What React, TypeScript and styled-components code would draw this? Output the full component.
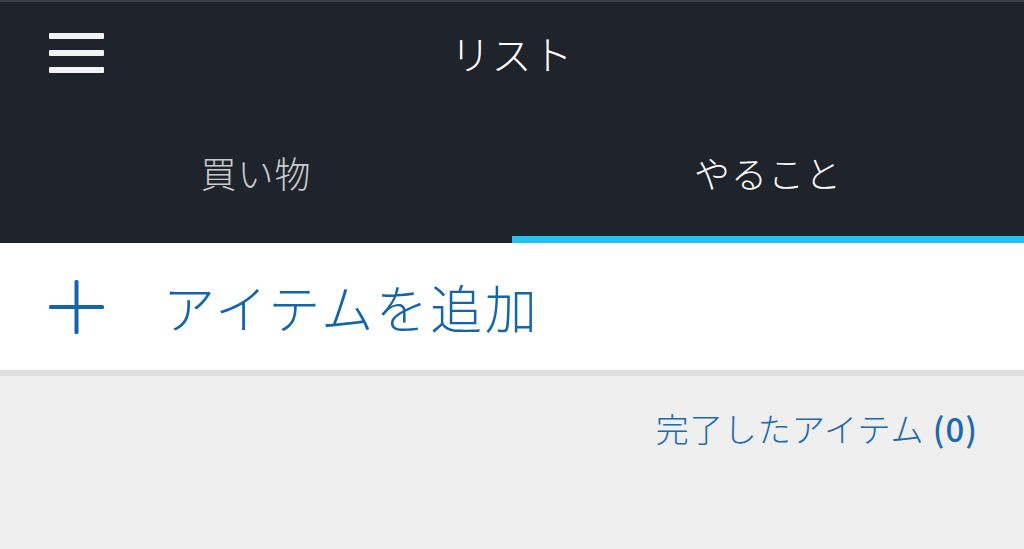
import React, { useState } from "react";
import styled, { createGlobalStyle } from "styled-components";

const GlobalStyle = createGlobalStyle`
  html, body {
    margin: 0;
    padding: 0;
    background: #efefef;
    font-family: "Noto Sans CJK JP", "Noto Sans", sans-serif;
  }
`;

const Page = styled.div`
  width: 1024px;
  height: 549px;
  display: flex;
  flex-direction: column;
  background: #efefef;
  overflow: hidden;
`;

const Header = styled.header`
  background: #1f232b;
  border-top: 2px solid #3a3e46;
  display: flex;
  flex-direction: column;
`;

const TopBar = styled.div`
  height: 102px;
  display: grid;
  grid-template-columns: 130px 1fr 130px;
  align-items: center;
`;

const MenuButton = styled.button`
  background: none;
  border: none;
  padding: 0;
  margin-left: 49px;
  width: 55px;
  height: 40px;
  display: flex;
  flex-direction: column;
  justify-content: space-between;
  cursor: pointer;
  span {
    display: block;
    height: 6px;
    background: #f2f2f4;
    border-radius: 1px;
  }
`;

const Title = styled.h1`
  margin: 0;
  text-align: center;
  color: #ffffff;
  font-size: 40px;
  font-weight: 300;
  letter-spacing: 1px;
`;

const Tabs = styled.nav`
  display: flex;
  height: 139px;
`;

const Tab = styled.button<{ $active?: boolean }>`
  flex: 1;
  background: none;
  border: none;
  border-bottom: 7px solid ${(p) => (p.$active ? "#23c1f2" : "transparent")};
  color: ${(p) => (p.$active ? "#ffffff" : "#c9cacc")};
  font-family: inherit;
  font-size: 36px;
  font-weight: 300;
  letter-spacing: 1px;
  padding: 4px 0 0;
  cursor: pointer;
`;

const AddRow = styled.div`
  background: #ffffff;
  height: 127px;
  display: flex;
  align-items: center;
  padding-left: 49px;
  gap: 59px;
  color: #1566a9;
  border-bottom: 6px solid #dedede;
`;

const AddLabel = styled.span`
  font-size: 52px;
  font-weight: 300;
  letter-spacing: 2.5px;
  line-height: 1;
`;

const Completed = styled.div`
  display: flex;
  justify-content: flex-end;
  padding: 28px 46px 0 0;
`;

const CompletedLink = styled.a`
  color: #1a6aac;
  font-size: 33px;
  font-weight: 300;
  letter-spacing: 1px;
  text-decoration: none;
  cursor: pointer;
`;

const Count = styled.span`
  font-weight: 500;
`;

const PlusIcon = () => (
  <svg width="55" height="54" viewBox="0 0 55 54">
    <rect x="25.5" y="0" width="4" height="54" rx="1.5" fill="#1566a9" />
    <rect x="0" y="25" width="55" height="4" rx="1.5" fill="#1566a9" />
  </svg>
);

export default function App() {
  const [tab, setTab] = useState(1);
  const tabs = ["買い物", "やること"];
  const done = 0;

  return (
    <Page>
      <GlobalStyle />
      <Header>
        <TopBar>
          <MenuButton aria-label="menu">
            <span />
            <span />
            <span />
          </MenuButton>
          <Title>リスト</Title>
          <div />
        </TopBar>
        <Tabs>
          {tabs.map((t, i) => (
            <Tab key={t} $active={tab === i} onClick={() => setTab(i)}>
              {t}
            </Tab>
          ))}
        </Tabs>
      </Header>
      <AddRow>
        <PlusIcon />
        <AddLabel>アイテムを追加</AddLabel>
      </AddRow>
      <Completed>
        <CompletedLink>
          完了したアイテム <Count>({done})</Count>
        </CompletedLink>
      </Completed>
    </Page>
  );
}
